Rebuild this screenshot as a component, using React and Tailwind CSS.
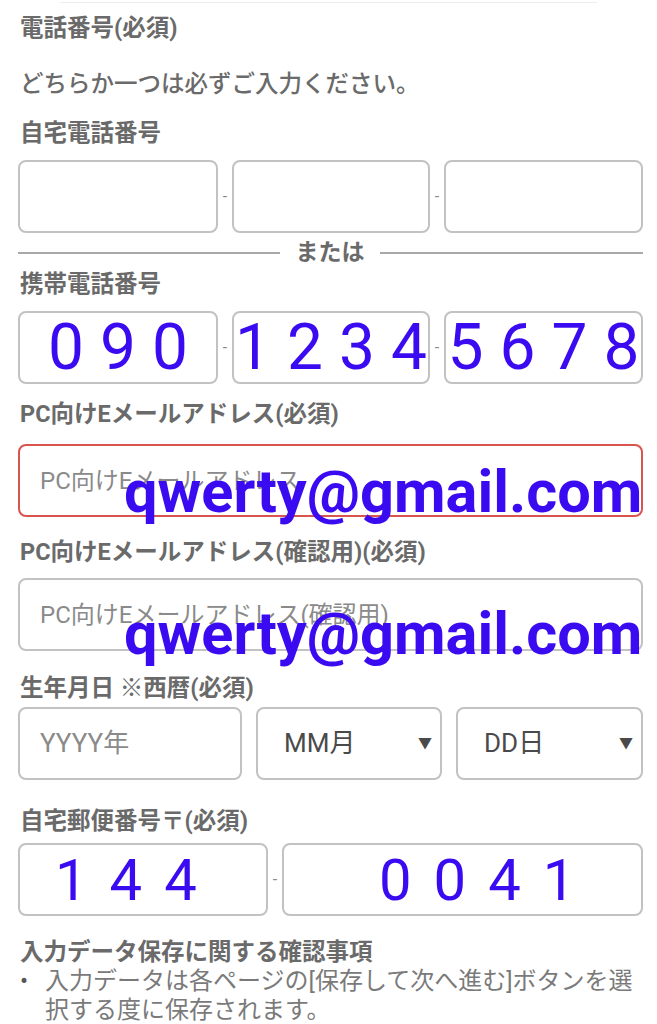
import React from "react";

const font = { fontFamily: 'Roboto, "Noto Sans CJK JP", sans-serif' };

const Label = ({ children, className = "" }) => (
  <div className={"h-[30px] whitespace-nowrap leading-[30px] text-[23.5px] font-bold text-[#6a6a6a] " + className}>{children}</div>
);

const Box = ({ className = "", children }) => (
  <div className={"relative h-[73px] min-w-0 shrink-0 rounded-lg border-2 border-[#c2c2c2] bg-white " + className}>{children}</div>
);

const Dash = () => <span className="w-[14px] shrink-0 text-center text-[16px] leading-none text-[#8a8a8a]">-</span>;

const Digits = ({ text }) => (
  <div className="flex h-full items-center justify-center overflow-visible">
    <span className="mr-[-16px] whitespace-nowrap text-[64px] leading-none tracking-[16px] text-[#3a0af0]">{text}</span>
  </div>
);

const Overlay = ({ top }) => (
  <span
    className={
      "pointer-events-none absolute left-[104px] whitespace-nowrap text-[59.5px] font-bold leading-none text-[#3a0af0] " + top
    }
  >
    qwerty@gmail.com
  </span>
);

export default function App() {
  return (
    <div className="min-h-screen overflow-hidden bg-white" style={font}>
      <div className="mx-[60px] h-[3px] border-b border-[#ededed]" />
      <div className="pl-[18px] pr-[14px]">
        <Label className="mt-[10px] pl-[2px]">電話番号(必須)</Label>
        <p className="mt-[26px] h-[30px] pl-[2px] text-[23.5px] font-medium leading-[30px] text-[#6a6a6a]">
          どちらか一つは必ずご入力ください。
        </p>
        <Label className="mt-[19px] pl-[2px]">自宅電話番号</Label>

        <div className="mt-[12px] flex items-center">
          <Box className="w-[200px]" />
          <Dash />
          <Box className="w-[198px]" />
          <Dash />
          <Box className="w-[199px]" />
        </div>

        <div className="mt-[5px] flex h-[30px] items-center">
          <div className="h-[2px] w-[262px] bg-[#a8a8a8]" />
          <span className="w-[100px] text-center text-[23px] font-bold text-[#6a6a6a]">または</span>
          <div className="h-[2px] flex-1 bg-[#a8a8a8]" />
        </div>

        <Label className="mt-[1px] pl-[2px]">携帯電話番号</Label>
        <div className="mt-[12px] flex items-center">
          <Box className="w-[200px]">
            <Digits text="090" />
          </Box>
          <Dash />
          <Box className="w-[198px]">
            <Digits text="1234" />
          </Box>
          <Dash />
          <Box className="w-[199px]">
            <Digits text="5678" />
          </Box>
        </div>

        <Label className="mt-[15px] pl-[2px]">PC向けEメールアドレス(必須)</Label>
        <div className="relative mt-[15px] h-[73px] rounded-lg border-2 border-[#d9534f] bg-white">
          <div className="flex h-full items-center pl-[20px] text-[24px] text-[#8a8a8a]">PC向けEメールアドレス</div>
          <Overlay top="top-[17px]" />
        </div>

        <Label className="mt-[20px] pl-[2px]">PC向けEメールアドレス(確認用)(必須)</Label>
        <Box className="mt-[11px] w-full">
          <div className="flex h-full items-center pl-[20px] text-[24px] text-[#8a8a8a]">PC向けEメールアドレス(確認用)</div>
          <Overlay top="top-[25px]" />
        </Box>

        <Label className="mt-[22px] pl-[2px]">生年月日 ※西暦(必須)</Label>
        <div className="mt-[4px] flex gap-[14px]">
          <Box className="w-[224px]">
            <div className="flex h-full items-center pl-[20px] text-[26px] text-[#8a8a8a]">YYYY年</div>
          </Box>
          <Box className="w-[186px]">
            <div className="flex h-full items-center justify-between pl-[26px] pr-[8px] text-[26px] text-[#4a4a4a]">
              <span>MM月</span>
              <span className="text-[14px]">▼</span>
            </div>
          </Box>
          <Box className="flex-1">
            <div className="flex h-full items-center justify-between pl-[26px] pr-[8px] text-[26px] text-[#4a4a4a]">
              <span>DD日</span>
              <span className="text-[14px]">▼</span>
            </div>
          </Box>
        </div>

        <Label className="mt-[26px] pl-[2px]">自宅郵便番号〒(必須)</Label>
        <div className="mt-[7px] flex items-center">
          <Box className="w-[250px]">
            <div className="flex h-full items-center pl-[35px]">
              <span className="whitespace-nowrap text-[58px] leading-none tracking-[22px] text-[#3a0af0]">144</span>
            </div>
          </Box>
          <Dash />
          <Box className="flex-1">
            <div className="flex h-full items-center pl-[95px]">
              <span className="whitespace-nowrap text-[58px] leading-none tracking-[22px] text-[#3a0af0]">0041</span>
            </div>
          </Box>
        </div>

        <Label className="mt-[21px] pl-[2px]">入力データ保存に関する確認事項</Label>
        <div className="flex text-[24px] leading-[29px] text-[#7a7a7a]">
          <span className="w-[27px] shrink-0 pl-[2px] text-[#555]">•</span>
          <p className="flex-1 whitespace-nowrap">
            入力データは各ページの[保存して次へ進む]ボタンを選
            <br />
            択する度に保存されます。
          </p>
        </div>
      </div>
    </div>
  );
}
